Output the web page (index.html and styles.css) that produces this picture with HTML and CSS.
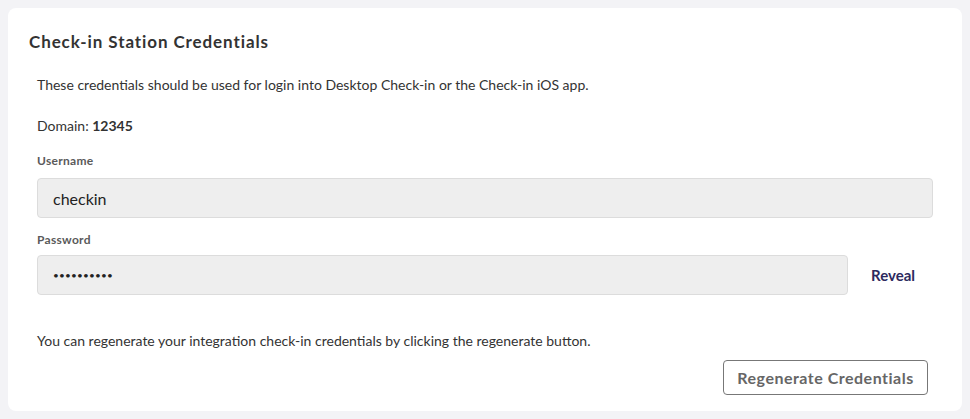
FILE: index.html
```html
<!DOCTYPE html>
<html lang="en">
<head>
<meta charset="utf-8">
<title>Check-in Station Credentials</title>
<link rel="stylesheet" href="styles.css">
</head>
<body>
<section class="card">
  <h2 class="card-title">Check-in Station Credentials</h2>
  <div class="card-body">
    <p class="text intro">These credentials should be used for login into Desktop Check-in or the Check-in iOS app.</p>
    <p class="text domain">Domain: <strong>12345</strong></p>
    <label class="field-label" for="username">Username</label>
    <div class="field username-field" id="username">checkin</div>
    <label class="field-label pw-label" for="password">Password</label>
    <div class="pw-row">
      <div class="field pw-field" id="password">••••••••••</div>
      <div class="reveal-col"><span class="reveal">Reveal</span></div>
    </div>
    <p class="text regen-text">You can regenerate your integration check-in credentials by clicking the regenerate button.</p>
    <div class="actions">
      <button class="btn" type="button">Regenerate Credentials</button>
    </div>
  </div>
</section>
</body>
</html>
```

FILE: styles.css
```css
html, body {
  margin: 0;
  padding: 0;
}
body {
  background: #f3f3f6;
  padding: 8px;
  font-family: Lato, "Liberation Sans", sans-serif;
  color: #333;
}
.card {
  background: #fff;
  border-radius: 8px;
  padding: 24px 29px 16px 21px;
}
.card-title {
  margin: 0 0 23px 0;
  font-size: 17px;
  line-height: 20px;
  font-weight: 700;
  letter-spacing: 0.9px;
  color: #333;
}
.card-body {
  padding-left: 8px;
}
.text {
  margin: 0;
  font-size: 14px;
  line-height: 20px;
  color: #333;
}
.intro { margin-bottom: 21px; }
.domain { margin-bottom: 17px; }
.domain strong { font-weight: 700; }
.field-label {
  display: block;
  font-size: 12px;
  line-height: 16px;
  font-weight: 700;
  letter-spacing: 0.3px;
  color: #5a5a5a;
  margin-bottom: 9px;
}
.pw-label { margin-bottom: 7px; }
.field {
  box-sizing: border-box;
  height: 40px;
  background: #eeeeee;
  border: 1px solid #dcdcdc;
  border-radius: 4px;
  padding: 0 15px;
  display: flex;
  align-items: center;
  font-size: 16px;
  color: #222;
}
.username-field { margin-bottom: 14px; }
.pw-row {
  display: flex;
  align-items: center;
  margin-bottom: 36px;
}
.pw-field {
  flex: 1;
  font-size: 10px;
  letter-spacing: 0.2px;
}
.reveal-col {
  width: 85px;
  display: flex;
  justify-content: center;
  padding-left: 5px;
  box-sizing: border-box;
}
.reveal {
  font-size: 15px;
  font-weight: 700;
  color: #2d2a5e;
}
.regen-text { margin-bottom: 9px; }
.actions {
  display: flex;
  justify-content: flex-end;
  padding-right: 5px;
}
.btn {
  box-sizing: border-box;
  height: 35px;
  width: 205px;
  background: #fff;
  border: 1px solid #777;
  border-radius: 4px;
  font-family: inherit;
  font-size: 16px;
  font-weight: 700;
  letter-spacing: 0.5px;
  color: #666;
  padding: 0 10px;
}
```
